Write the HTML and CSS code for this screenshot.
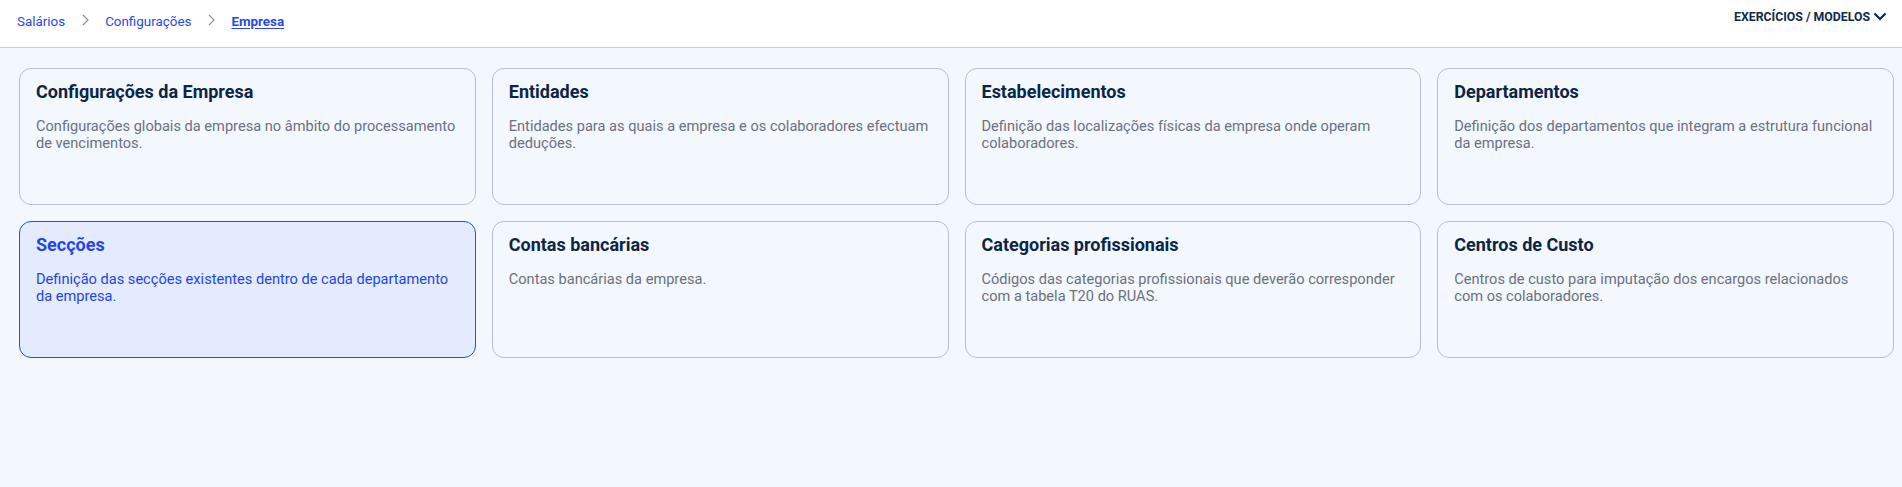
FILE: index.html
```html
<!DOCTYPE html>
<html lang="pt">
<head>
<meta charset="utf-8">
<title>Empresa</title>
<link rel="stylesheet" href="styles.css">
</head>
<body>
<header class="topbar">
  <nav class="crumbs">
    <a class="crumb" href="#">Salários</a>
    <svg class="sep" viewBox="0 0 7 12" width="7" height="12"><path d="M1 1 L6 6 L1 11" fill="none" stroke="#8a93a3" stroke-width="1.2"/></svg>
    <a class="crumb" href="#">Configurações</a>
    <svg class="sep" viewBox="0 0 7 12" width="7" height="12"><path d="M1 1 L6 6 L1 11" fill="none" stroke="#8a93a3" stroke-width="1.2"/></svg>
    <a class="crumb current" href="#">Empresa</a>
  </nav>
  <button class="menu">EXERCÍCIOS / MODELOS
    <svg viewBox="0 0 14 9" width="14" height="9"><path d="M1.5 1.5 L7 7 L12.5 1.5" fill="none" stroke="#0f2a4a" stroke-width="2.2"/></svg>
  </button>
</header>
<main class="grid">
  <a class="card" href="#"><h2>Configurações da Empresa</h2><p>Configurações globais da empresa no âmbito do processamento de vencimentos.</p></a>
  <a class="card" href="#"><h2>Entidades</h2><p>Entidades para as quais a empresa e os colaboradores efectuam deduções.</p></a>
  <a class="card" href="#"><h2>Estabelecimentos</h2><p>Definição das localizações físicas da empresa onde operam colaboradores.</p></a>
  <a class="card" href="#"><h2>Departamentos</h2><p>Definição dos departamentos que integram a estrutura funcional da empresa.</p></a>
  <a class="card active" href="#"><h2>Secções</h2><p>Definição das secções existentes dentro de cada departamento da empresa.</p></a>
  <a class="card" href="#"><h2>Contas bancárias</h2><p>Contas bancárias da empresa.</p></a>
  <a class="card" href="#"><h2>Categorias profissionais</h2><p>Códigos das categorias profissionais que deverão corresponder com a tabela T20 do RUAS.</p></a>
  <a class="card" href="#"><h2>Centros de Custo</h2><p>Centros de custo para imputação dos encargos relacionados com os colaboradores.</p></a>
</main>
</body>
</html>
```
FILE: styles.css
```css
* { box-sizing: border-box; }
html, body { margin: 0; padding: 0; }
body {
  font-family: Roboto, "Liberation Sans", sans-serif;
  background: #f3f7fe;
  height: 487px;
  overflow: hidden;
}
.topbar {
  height: 48px;
  background: #ffffff;
  border-bottom: 1px solid #c8cfdb;
  display: flex;
  align-items: flex-start;
  justify-content: space-between;
  padding: 0 15px 0 17px;
}
.crumbs {
  display: flex;
  align-items: center;
  height: 42px;
}
.crumb {
  font-size: 13.4px;
  color: #2747f3;
  text-decoration: none;
}
.crumb.current {
  font-weight: 700;
  text-decoration: underline;
  text-underline-offset: 2px;
}
.sep { margin: 0 16px 0 17px; position: relative; top: -1px; }
.menu {
  display: flex;
  align-items: center;
  gap: 3px;
  height: 33px;
  border: 0;
  background: none;
  padding: 0;
  font-family: inherit;
  font-size: 12.3px;
  font-weight: 700;
  color: #0f2a4a;
}
.grid {
  display: grid;
  grid-template-columns: repeat(4, 1fr);
  grid-auto-rows: 137px;
  gap: 16px;
  padding: 20px 8px 0 19px;
}
.card {
  display: block;
  border: 1px solid #b9c0cd;
  border-radius: 12px;
  padding: 10px 16px;
  text-decoration: none;
  background: #f3f7fe;
}
.card h2 {
  margin: 0;
  font-size: 18px;
  line-height: 26px;
  font-weight: 700;
  color: #0b2545;
}
.card p {
  margin: 12.5px 0 0;
  font-size: 14.6px;
  line-height: 17.6px;
  color: #6b7280;
}
.card.active {
  background: #e4ebfd;
  border-color: #1f4ff2;
}
.card.active h2,
.card.active p { color: #1f45f0; }
```
